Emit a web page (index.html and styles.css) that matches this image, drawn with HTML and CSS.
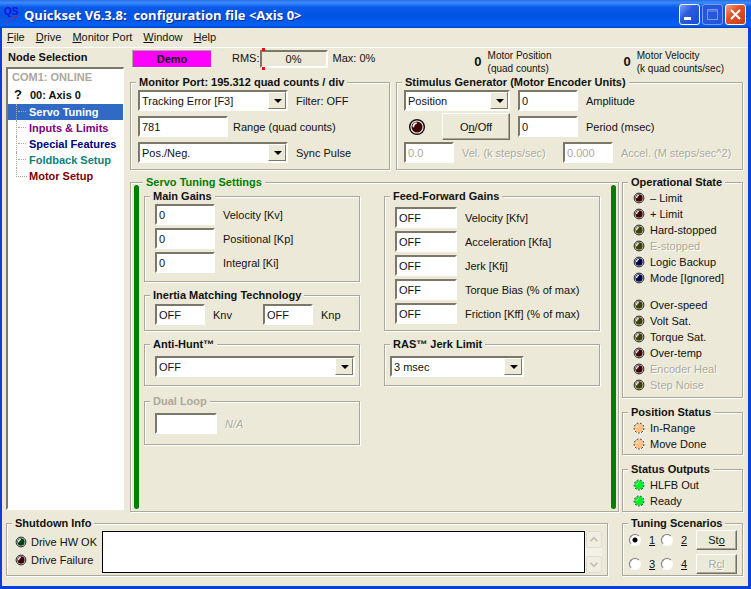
FILE: index.html
```
<!DOCTYPE html>
<html lang="en">
<head>
    <meta charset="UTF-8">
    <meta name="viewport" content="width=device-width, initial-scale=1.0">
    <title>Quickset V6.3.8</title>
    <link rel="stylesheet" href="styles.css">
</head>
<body>
    <svg class="defs" aria-hidden="true">
        <symbol id="led" viewBox="0 0 12 12">
            <circle cx="6" cy="6" r="5.5" fill="#fff"/>
            <circle cx="6" cy="6" r="4.9" fill="none" stroke="#111" stroke-width="1"/>
            <circle cx="6" cy="6" r="3.7" fill="currentColor"/>
            <path d="M3.6 6.2A2.6 2.6 0 0 1 5.8 3.4" fill="none" stroke="#fff" stroke-width="1.1"/>
        </symbol>
        <symbol id="led-on" viewBox="0 0 12 12">
            <circle cx="6" cy="6" r="6" fill="#fff"/>
            <circle cx="6" cy="6" r="4.6" fill="currentColor"/>
            <circle cx="6" cy="6" r="5" fill="none" stroke="#222" stroke-width="1" stroke-dasharray="2 1.4"/>
            <path d="M3.8 5.6A2.4 2.4 0 0 1 5.6 3.6" fill="none" stroke="#fff" stroke-width="1"/>
        </symbol>
    </svg>

    <div class="window">
        <header class="titlebar">
            <svg class="logo" viewBox="0 0 16 20" aria-hidden="true">
                <text x="0" y="10">QS</text>
                <path d="M2 18L13 11" fill="none" stroke="#f01040" stroke-width="1" stroke-dasharray="2 1"/>
            </svg>
            <h1>Quickset V6.3.8:&nbsp; configuration file &lt;Axis 0&gt;</h1>
            <button class="caption-btn" aria-label="Minimize"><svg viewBox="0 0 19 19"><rect x="4" y="12" width="7" height="3" fill="#fff"/></svg></button>
            <button class="caption-btn dim" aria-label="Maximize"><svg viewBox="0 0 19 19"><path d="M4.5 4.5h10v10h-10zM4.5 6h10" fill="none" stroke="#7d9bf0" stroke-width="1"/></svg></button>
            <button class="caption-btn close" aria-label="Close"><svg viewBox="0 0 19 19"><path d="M5 5L14 14M14 5L5 14" stroke="#fff" stroke-width="2"/></svg></button>
        </header>

        <nav class="menu">
            <a href="#"><u>F</u>ile</a>
            <a href="#"><u>D</u>rive</a>
            <a href="#"><u>M</u>onitor Port</a>
            <a href="#"><u>W</u>indow</a>
            <a href="#"><u>H</u>elp</a>
        </nav>

        <main class="content">
            <div class="upper">
                <aside class="nodes">
                    <h2>Node Selection</h2>
                    <div class="tree">
                        <div class="port">COM1: ONLINE</div>
                        <div class="axis"><span>?</span>00: Axis 0</div>
                        <ul>
                            <li class="selected"><a href="#">Servo Tuning</a></li>
                            <li><a class="purple" href="#">Inputs &amp; Limits</a></li>
                            <li><a class="navy" href="#">Special Features</a></li>
                            <li><a class="teal" href="#">Foldback Setup</a></li>
                            <li><a class="maroon" href="#">Motor Setup</a></li>
                        </ul>
                    </div>
                </aside>

                <div class="panels">
                    <div class="readouts">
                        <div class="demo">Demo</div>
                        <div class="rms"><span>RMS:</span><div class="meter">0%</div><span>Max: 0%</span></div>
                        <div class="motor"><b>0</b><span>Motor Position<br>(quad counts)</span></div>
                        <div class="motor velocity"><b>0</b><span>Motor Velocity<br>(k quad counts/sec)</span></div>
                    </div>

                    <div class="top-row">
                        <fieldset class="monitor">
                            <legend>Monitor Port: 195.312 quad counts / div</legend>
                            <div class="rows">
                                <div class="row">
                                    <span class="combo w150"><select id="source"><option>Tracking Error [F3]</option></select></span>
                                    <label for="source">Filter: OFF</label>
                                </div>
                                <div class="row tight">
                                    <input class="w90" id="range" type="text" value="781">
                                    <label for="range">Range (quad counts)</label>
                                </div>
                                <div class="row">
                                    <span class="combo w150"><select id="sync"><option>Pos./Neg.</option></select></span>
                                    <label for="sync">Sync Pulse</label>
                                </div>
                            </div>
                        </fieldset>

                        <fieldset class="stimulus">
                            <legend>Stimulus Generator (Motor Encoder Units)</legend>
                            <div class="rows">
                                <div class="row">
                                    <span class="combo w106"><select aria-label="Stimulus type"><option>Position</option></select></span>
                                    <input class="w60" id="amplitude" type="text" value="0">
                                    <label for="amplitude">Amplitude</label>
                                </div>
                                <div class="row">
                                    <div class="trigger w106">
                                        <svg class="led big red"><use href="#led"/></svg>
                                        <button class="btn">O<u>n</u>/Off</button>
                                    </div>
                                    <input class="w60" id="period" type="text" value="0">
                                    <label for="period">Period (msec)</label>
                                </div>
                                <div class="row">
                                    <input class="w50" id="vel" type="text" value="0.0" disabled>
                                    <label class="off vel" for="vel">Vel. (k steps/sec)</label>
                                    <input class="w50" id="accel" type="text" value="0.000" disabled>
                                    <label class="off" for="accel">Accel. (M steps/sec^2)</label>
                                </div>
                            </div>
                        </fieldset>
                    </div>

                    <div class="mid-row">
                        <fieldset class="servo">
                            <legend>Servo Tuning Settings</legend>
                            <div class="servo-body">
                                <div class="bar"></div>
                                <div class="columns">
                                    <div class="column">
                                        <fieldset>
                                            <legend>Main Gains</legend>
                                            <div class="rows gains main-gains">
                                                <div class="row"><input class="w60" id="kv" type="text" value="0"><label for="kv">Velocity [Kv]</label></div>
                                                <div class="row"><input class="w60" id="kp" type="text" value="0"><label for="kp">Positional [Kp]</label></div>
                                                <div class="row"><input class="w60" id="ki" type="text" value="0"><label for="ki">Integral [Ki]</label></div>
                                            </div>
                                        </fieldset>
                                        <fieldset>
                                            <legend>Inertia Matching Technology</legend>
                                            <div class="rows gains inertia">
                                                <div class="row">
                                                    <input class="w50" id="knv" type="text" value="OFF"><label class="knv" for="knv">Knv</label>
                                                    <input class="w50" id="knp" type="text" value="OFF"><label for="knp">Knp</label>
                                                </div>
                                            </div>
                                        </fieldset>
                                        <fieldset>
                                            <legend>Anti-Hunt™</legend>
                                            <div class="rows gains limit">
                                                <span class="combo w200"><select aria-label="Anti-Hunt"><option>OFF</option></select></span>
                                            </div>
                                        </fieldset>
                                        <fieldset class="dual" disabled>
                                            <legend>Dual Loop</legend>
                                            <div class="rows gains limit">
                                                <div class="row"><input class="w62" id="dual" type="text"><label class="off" for="dual"><i>N/A</i></label></div>
                                            </div>
                                        </fieldset>
                                    </div>
                                    <div class="column">
                                        <fieldset>
                                            <legend>Feed-Forward Gains</legend>
                                            <div class="rows gains forward">
                                                <div class="row"><input class="w62" id="kfv" type="text" value="OFF"><label for="kfv">Velocity [Kfv]</label></div>
                                                <div class="row"><input class="w62" id="kfa" type="text" value="OFF"><label for="kfa">Acceleration [Kfa]</label></div>
                                                <div class="row"><input class="w62" id="kfj" type="text" value="OFF"><label for="kfj">Jerk [Kfj]</label></div>
                                                <div class="row"><input class="w62" id="bias" type="text" value="OFF"><label for="bias">Torque Bias (% of max)</label></div>
                                                <div class="row"><input class="w62" id="kff" type="text" value="OFF"><label for="kff">Friction [Kff] (% of max)</label></div>
                                            </div>
                                        </fieldset>
                                        <fieldset>
                                            <legend>RAS™ Jerk Limit</legend>
                                            <div class="rows limit jerk">
                                                <span class="combo w134"><select aria-label="RAS Jerk Limit"><option>3 msec</option></select></span>
                                            </div>
                                        </fieldset>
                                    </div>
                                </div>
                                <div class="bar"></div>
                            </div>
                        </fieldset>

                        <div class="status">
                            <fieldset>
                                <legend>Operational State</legend>
                                <ul class="leds">
                                    <li><svg class="led red"><use href="#led"/></svg>– Limit</li>
                                    <li><svg class="led red"><use href="#led"/></svg>+ Limit</li>
                                    <li><svg class="led olive"><use href="#led"/></svg>Hard-stopped</li>
                                    <li class="off"><svg class="led olive"><use href="#led"/></svg>E-stopped</li>
                                    <li><svg class="led blue"><use href="#led"/></svg>Logic Backup</li>
                                    <li><svg class="led blue"><use href="#led"/></svg>Mode [Ignored]</li>
                                </ul>
                                <ul class="leds second">
                                    <li><svg class="led olive"><use href="#led"/></svg>Over-speed</li>
                                    <li><svg class="led olive"><use href="#led"/></svg>Volt Sat.</li>
                                    <li><svg class="led olive"><use href="#led"/></svg>Torque Sat.</li>
                                    <li><svg class="led red"><use href="#led"/></svg>Over-temp</li>
                                    <li class="off"><svg class="led red"><use href="#led"/></svg>Encoder Heal</li>
                                    <li class="off"><svg class="led olive"><use href="#led"/></svg>Step Noise</li>
                                </ul>
                            </fieldset>
                            <fieldset>
                                <legend>Position Status</legend>
                                <ul class="leds">
                                    <li><svg class="led peach"><use href="#led-on"/></svg>In-Range</li>
                                    <li><svg class="led peach"><use href="#led-on"/></svg>Move Done</li>
                                </ul>
                            </fieldset>
                            <fieldset>
                                <legend>Status Outputs</legend>
                                <ul class="leds">
                                    <li><svg class="led lime"><use href="#led-on"/></svg>HLFB Out</li>
                                    <li><svg class="led lime"><use href="#led-on"/></svg>Ready</li>
                                </ul>
                            </fieldset>
                        </div>
                    </div>
                </div>
            </div>

            <div class="lower">
                <fieldset class="shutdown">
                    <legend>Shutdown Info</legend>
                    <div class="shutdown-body">
                        <ul>
                            <li><svg class="led green"><use href="#led"/></svg>Drive HW OK</li>
                            <li><svg class="led red"><use href="#led"/></svg>Drive Failure</li>
                        </ul>
                        <textarea aria-label="Shutdown log"></textarea>
                        <div class="scroll">
                            <svg viewBox="0 0 16 16"><path d="M4 10L8 6L12 10" fill="none" stroke="#c4c0ae" stroke-width="2"/></svg>
                            <svg viewBox="0 0 16 16"><path d="M4 6L8 10L12 6" fill="none" stroke="#c4c0ae" stroke-width="2"/></svg>
                        </div>
                    </div>
                </fieldset>
                <fieldset class="tuning">
                    <legend>Tuning Scenarios</legend>
                    <div class="scenarios">
                        <input type="radio" name="scenario" id="s1" checked><label for="s1"><u>1</u></label>
                        <input type="radio" name="scenario" id="s2"><label for="s2"><u>2</u></label>
                        <button class="btn">St<u>o</u></button>
                        <input type="radio" name="scenario" id="s3"><label for="s3"><u>3</u></label>
                        <input type="radio" name="scenario" id="s4"><label for="s4"><u>4</u></label>
                        <button class="btn" disabled>R<u>c</u>l</button>
                    </div>
                </fieldset>
            </div>
        </main>
    </div>
</body>
</html>
```
FILE: styles.css
```
* {
    box-sizing: border-box;
}
body {
    margin: 0;
    background: #ece9d8;
    color: #111;
    font: 11px/14px "Liberation Sans", Arial, sans-serif;
}
h1, h2, ul {
    margin: 0;
    padding: 0;
    list-style: none;
}
a {
    color: inherit;
    text-decoration: none;
}
.defs {
    position: absolute;
    width: 0;
    height: 0;
}
.window {
    display: flex;
    flex-direction: column;
    min-width: 740px;
    min-height: 100vh;
    border: solid #0a3fd8;
    border-width: 0 3px 3px 2px;
}

/* title bar */
.titlebar {
    display: flex;
    align-items: center;
    gap: 2px;
    height: 28px;
    margin: 0 -3px 0 -2px;
    padding: 1px 5px 0 4px;
    background: linear-gradient(#2a6ce0, #3a8cff 10%, #0a5ae8 25%, #0054e3 60%, #0661f5 90%, #0340c0);
}
.logo {
    width: 16px;
    height: 20px;
    font: bold 10px "Liberation Sans", Arial, sans-serif;
    fill: #1010d8;
}
.titlebar h1 {
    flex: 1;
    margin-left: 2px;
    color: #fff;
    font: bold 13px/20px "Open Sans", sans-serif;
    text-shadow: 1px 1px #0a2a8c;
    white-space: nowrap;
}
.caption-btn {
    width: 21px;
    height: 21px;
    padding: 0;
    border: 1px solid #fff;
    border-radius: 3px;
    background: linear-gradient(135deg, #7aa0f4, #2a5ce0 40%, #1c4ad0);
}
.caption-btn svg {
    display: block;
    width: 19px;
    height: 19px;
}
.caption-btn.dim {
    border-color: #7d9bf0;
    background: #2458dc;
}
.caption-btn.close {
    background: linear-gradient(135deg, #f0a080, #e0542c 40%, #c83c10);
}

.menu {
    display: flex;
    gap: 11px;
    height: 20px;
    padding: 2px 5px;
    border-bottom: 1px solid #fff;
}

.content {
    flex: 1;
    display: flex;
    flex-direction: column;
    gap: 4px;
    padding: 0 5px 10px 4px;
}
.upper {
    flex: 1;
    display: flex;
    gap: 6px;
}

/* node tree */
.nodes {
    display: flex;
    flex-direction: column;
    width: 118px;
}
.nodes h2 {
    padding: 2px 2px 3px;
    font: bold 11px/14px "Liberation Sans", Arial, sans-serif;
}
.tree {
    flex: 1;
    margin-bottom: 2px;
    border: 2px solid #fff;
    border-top-color: #7b786a;
    border-left-color: #7b786a;
    border-right-width: 1px;
    background: #fff;
    font-weight: bold;
    line-height: 16px;
    white-space: nowrap;
}
.port {
    height: 18px;
    padding-left: 4px;
    color: #aca899;
}
.axis {
    height: 17px;
    padding-left: 6px;
}
.axis span {
    display: inline-block;
    width: 16px;
    font-size: 13px;
}
.tree li {
    position: relative;
    height: 16px;
    padding-left: 21px;
}
.tree li::before {
    content: "";
    position: absolute;
    left: 8px;
    top: 0;
    width: 10px;
    height: 8px;
    border: dotted #aca899;
    border-width: 0 0 1px 1px;
}
.tree li:not(:last-child)::before {
    height: 16px;
    border-bottom: 0;
}
.tree li:not(:last-child)::after {
    content: "";
    position: absolute;
    left: 10px;
    top: 7px;
    width: 8px;
    border-top: 1px dotted #aca899;
}
.selected {
    background: #316ac5;
    color: #fff;
}
.purple { color: #800080; }
.navy { color: #000080; }
.teal { color: #108078; }
.maroon { color: #800000; }

/* readouts above the panels */
.panels {
    flex: 1;
    display: flex;
    flex-direction: column;
}
.readouts {
    display: flex;
    height: 27px;
    padding-left: 2px;
}
.demo {
    width: 80px;
    height: 18px;
    margin: 2px 20px 0 0;
    border: 1px solid #aca899;
    border-right-color: #fff;
    border-bottom-color: #fff;
    background: #f0f;
    font-weight: bold;
    line-height: 17px;
    text-align: center;
}
.rms {
    display: flex;
    align-items: flex-start;
    line-height: 20px;
    white-space: nowrap;
}
.meter {
    position: relative;
    width: 68px;
    height: 18px;
    margin: 2px 5px 0 0;
    border: 2px solid #fff;
    border-top-color: #7b786a;
    border-left-color: #7b786a;
    line-height: 15px;
    text-align: center;
}
.meter::before,
.meter::after {
    content: "";
    position: absolute;
    left: 0;
    width: 3px;
    height: 3px;
    background: #f00;
}
.meter::before { top: -4px; }
.meter::after { bottom: -4px; }
.motor {
    display: flex;
    align-items: center;
    gap: 6px;
    margin-left: auto;
    font-size: 10px;
    line-height: 13px;
    white-space: nowrap;
}
.motor b {
    font-size: 13px;
}
.velocity {
    margin: 0 19px 0 72px;
}

/* group boxes */
fieldset {
    min-width: 0;
    margin: 0;
    padding: 0;
    border: 1px solid #aca899;
    box-shadow: 1px 1px #fff, inset 1px 1px #fff;
}
legend {
    margin-left: 5px;
    padding: 0 3px;
    background: #ece9d8;
    font-weight: bold;
    white-space: nowrap;
}
.top-row {
    display: flex;
    gap: 6px;
    margin-bottom: 5px;
}
.monitor {
    width: 260px;
}
.stimulus {
    flex: 1;
}
.rows {
    display: flex;
    flex-direction: column;
    gap: 5px;
    padding: 1px 0 6px 7px;
}
.row {
    display: flex;
    align-items: center;
    gap: 8px;
    height: 21px;
    white-space: nowrap;
}
.row.tight {
    gap: 5px;
}
.off {
    color: #aca899;
    text-shadow: 1px 1px #fff;
}

input[type="text"],
select {
    height: 21px;
    margin: 0;
    padding: 0 2px;
    border: 2px solid #fff;
    border-top-color: #7b786a;
    border-left-color: #7b786a;
    border-radius: 0;
    background: #fff;
    color: #111;
    font: inherit;
}
input[type="text"]:disabled {
    color: #aca899;
}
select {
    display: block;
    width: 100%;
    appearance: none;
}
.combo {
    position: relative;
    display: block;
    height: 21px;
}
.combo::before {
    content: "";
    position: absolute;
    top: 2px;
    right: 2px;
    bottom: 2px;
    width: 16px;
    border: 1px solid #7b786a;
    border-top-color: #fff;
    border-left-color: #fff;
    background: #ece9d8;
    pointer-events: none;
}
.combo::after {
    content: "";
    position: absolute;
    top: 9px;
    right: 6px;
    border: 4px solid transparent;
    border-top-color: #000;
    border-bottom: 0;
    pointer-events: none;
}
.w50 { width: 50px; }
.w60 { width: 60px; }
.w62 { width: 62px; }
.w90 { width: 90px; }
.w106 { width: 106px; }
.w134 { width: 134px; }
.w150 { width: 150px; }
.w200 { width: 200px; }

.btn {
    padding: 0;
    border: 1px solid #716f64;
    border-top-color: #fff;
    border-left-color: #fff;
    background: #ece9d8;
    box-shadow: inset -1px -1px #aca899;
    color: #111;
    font: inherit;
}
.btn:disabled {
    color: #aca899;
    text-shadow: 1px 1px #fff;
}
.trigger {
    display: flex;
    align-items: center;
    justify-content: space-between;
    padding-left: 4px;
}
.trigger .btn {
    width: 68px;
    height: 27px;
}
.vel {
    width: 93px;
}

/* indicator lamps */
.led {
    flex: none;
    width: 12px;
    height: 12px;
}
.led.big {
    width: 18px;
    height: 18px;
}
.red { color: #400000; }
.olive { color: #404000; }
.blue { color: #000048; }
.green { color: #004010; }
.peach { color: #ffc080; }
.lime { color: #00f020; }

/* servo tuning */
.mid-row {
    flex: 1;
    display: flex;
    gap: 3px;
}
.servo {
    flex: 1;
}
.servo > legend {
    margin-left: 12px;
    color: #008000;
}
.servo-body {
    display: flex;
    height: 100%;
    padding: 0 2px 2px 3px;
}
.bar {
    width: 5px;
    margin-top: -4px;
    border-radius: 3px;
    background: #008000;
}
.columns {
    flex: 1;
    display: grid;
    grid-template-columns: 1fr 1fr;
    gap: 24px;
    margin: 0 11px 0 5px;
}
.column {
    display: flex;
    flex-direction: column;
    gap: 6px;
}
.gains {
    gap: 3px;
    padding-left: 10px;
}
.main-gains {
    padding-bottom: 8px;
}
.inertia {
    padding-top: 2px;
    padding-bottom: 5px;
}
.knv {
    width: 42px;
}
.forward {
    padding-top: 4px;
}
.limit {
    padding-top: 5px;
    padding-bottom: 8px;
}
.jerk {
    padding-left: 5px;
}
.dual {
    margin-top: 2px;
    padding-bottom: 2px;
}
.dual legend {
    color: #aca899;
}

/* status column */
.status {
    display: flex;
    flex-direction: column;
    gap: 7px;
    width: 121px;
}
.leds {
    padding: 1px 0 2px 10px;
}
.leds li {
    display: flex;
    align-items: center;
    gap: 5px;
    height: 16px;
    white-space: nowrap;
}
.leds.second {
    padding-top: 9px;
    padding-bottom: 4px;
}

/* bottom strip */
.lower {
    display: flex;
    gap: 14px;
}
.shutdown {
    flex: 1;
}
.shutdown-body {
    display: flex;
    padding: 1px 5px 2px 8px;
}
.shutdown-body ul {
    width: 87px;
    padding-top: 2px;
}
.shutdown-body li {
    display: flex;
    align-items: center;
    gap: 4px;
    height: 18px;
    white-space: nowrap;
}
.shutdown-body textarea {
    flex: 1;
    height: 42px;
    margin: 0;
    padding: 2px;
    border: 1px solid #000;
    border-radius: 0;
    background: #fff;
    font: inherit;
    resize: none;
}
.scroll {
    display: flex;
    flex-direction: column;
    justify-content: space-between;
    width: 17px;
    padding-left: 1px;
    background: #f4f2e8;
}
.scroll svg {
    width: 16px;
    height: 17px;
    border: 1px solid #e0dccb;
    border-radius: 2px;
    background: #f0eee2;
}
.tuning {
    width: 121px;
}
.scenarios {
    display: grid;
    grid-template-columns: 20px 12px 20px 15px 41px;
    row-gap: 4px;
    align-items: center;
    padding: 0 0 1px 6px;
}
.scenarios .btn {
    height: 20px;
}
input[type="radio"] {
    width: 12px;
    height: 12px;
    margin: 0;
    appearance: none;
    border: 1px solid #fff;
    border-top-color: #7b786a;
    border-left-color: #7b786a;
    border-radius: 50%;
    background: #fff;
}
input[type="radio"]:checked {
    background: radial-gradient(#000 2px, #fff 3px);
}
```
